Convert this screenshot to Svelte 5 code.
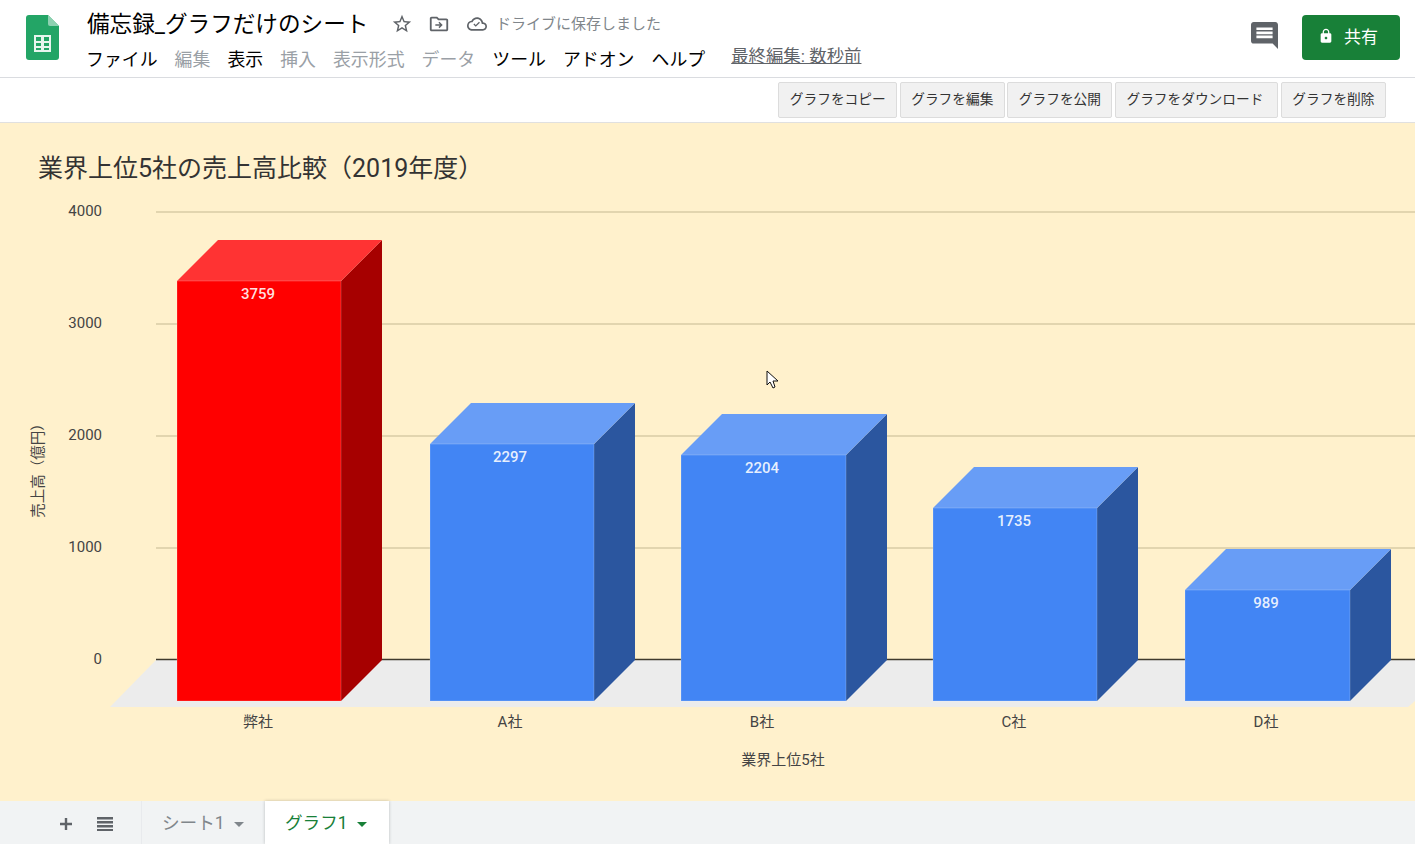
<script lang="ts">
  const menus = [
    { label: 'ファイル', off: false },
    { label: '編集', off: true },
    { label: '表示', off: false },
    { label: '挿入', off: true },
    { label: '表示形式', off: true },
    { label: 'データ', off: true },
    { label: 'ツール', off: false },
    { label: 'アドオン', off: false },
    { label: 'ヘルプ', off: false }
  ];
  const actions = ['グラフをコピー', 'グラフを編集', 'グラフを公開', 'グラフをダウンロード', 'グラフを削除'];

  // chart numbers are in page pixels, the svg viewBox starts at the top of the chart area
  const depth = 41;
  const bottom = 701;
  const bars = [
    { name: '弊社', value: 3759, x: 177, w: 164, top: 281, kind: 'red', cx: 258 },
    { name: 'A社', value: 2297, x: 430, w: 164, top: 444, kind: 'blue', cx: 510 },
    { name: 'B社', value: 2204, x: 681, w: 165, top: 455, kind: 'blue', cx: 762 },
    { name: 'C社', value: 1735, x: 933, w: 164, top: 508, kind: 'blue', cx: 1014 },
    { name: 'D社', value: 989, x: 1185, w: 165, top: 590, kind: 'blue', cx: 1266 }
  ];
  const ticks = [
    { label: '4000', y: 212 },
    { label: '3000', y: 324 },
    { label: '2000', y: 436 },
    { label: '1000', y: 548 }
  ];
</script>

<div class="page">
  <header class="head">
    <svg class="logo" viewBox="0 0 33 45" width="33" height="45">
      <path d="M3 0H22L33 11V42a3 3 0 0 1-3 3H3a3 3 0 0 1-3-3V3a3 3 0 0 1 3-3z" fill="#23a566" />
      <path d="M22 0L33 11H24a2 2 0 0 1-2-2z" fill="#8ed1b1" />
      <path d="M8 20H25V37H8zM10 22V26H15V22zM18 22V26H23V22zM10 28V31H15V28zM18 28V31H23V28zM10 33V35H15V33zM18 33V35H23V33z" fill="#e8f5ee" fill-rule="evenodd" />
    </svg>

    <div class="doc">
      <div class="title-row">
        <span class="doc-title">備忘録_グラフだけのシート</span>
        <svg class="star" viewBox="0 0 24 24">
          <path d="M22 9.24l-7.19-.62L12 2 9.19 8.63 2 9.24l5.46 4.73L5.82 21 12 17.27 18.18 21l-1.63-7.03L22 9.24zM12 15.4l-3.76 2.27 1-4.28-3.32-2.88 4.38-.38L12 6.1l1.71 4.04 4.38.38-3.32 2.88 1 4.28L12 15.4z" />
        </svg>
        <svg class="folder" viewBox="0 0 24 24">
          <path d="M20 6h-8l-2-2H4c-1.100 0-2 .9-2 2v12c0 1.100.9 2 2 2h16c1.100 0 2-.9 2-2V8c0-1.100-.9-2-2-2zm0 12H4V6h5.170l2 2H20v10zM12.500 9.500l-1.100 1.100 1.600 1.600H8v1.600h5l-1.600 1.600 1.100 1.100 3.500-3.500z" />
        </svg>
        <svg class="cloud" viewBox="0 0 24 24">
          <path d="M19.350 10.040C18.670 6.590 15.640 4 12 4 9.110 4 6.600 5.640 5.350 8.040 2.340 8.360 0 10.910 0 14c0 3.310 2.690 6 6 6h13c2.760 0 5-2.240 5-5 0-2.640-2.050-4.780-4.650-4.960zM19 18H6c-2.210 0-4-1.790-4-4 0-2.050 1.530-3.760 3.560-3.970l1.070-.11.500-.950C8.080 7.140 9.940 6 12 6c2.620 0 4.880 1.860 5.390 4.430l.300 1.500 1.530.110c1.560.100 2.780 1.410 2.780 2.960 0 1.650-1.350 3-3 3zM10.500 13.200l-1.700-1.700-1.100 1.100 2.800 2.800 5-5-1.100-1.100z" />
        </svg>
        <span class="saved">ドライブに保存しました</span>
      </div>
      <nav class="menu">
        {#each menus as m}
          <span class:off={m.off}>{m.label}</span>
        {/each}
        <span class="edited">最終編集: 数秒前</span>
      </nav>
    </div>

    <svg class="comment" viewBox="2 2 20 20" width="27" height="27">
      <path d="M21.990 4c0-1.100-.890-2-1.990-2H4c-1.100 0-2 .9-2 2v12c0 1.100.9 2 2 2h14l4 4-.010-18zM18 14H6v-2h12v2zm0-3H6V9h12v2zm0-3H6V6h12v2z" />
    </svg>
    <button class="share">
      <svg viewBox="0 0 24 24" width="16" height="16">
        <path d="M18 8h-1V6c0-2.760-2.240-5-5-5S7 3.240 7 6v2H6c-1.100 0-2 .9-2 2v10c0 1.100.9 2 2 2h12c1.100 0 2-.9 2-2V10c0-1.100-.9-2-2-2zm-6 9c-1.100 0-2-.9-2-2s.9-2 2-2 2 .9 2 2-.9 2-2 2zm3.100-9H8.900V6c0-1.710 1.390-3.100 3.100-3.100 1.710 0 3.100 1.390 3.100 3.100v2z" />
      </svg>
      共有
    </button>
  </header>

  <div class="toolbar">
    {#each actions as a}
      <button>{a}</button>
    {/each}
  </div>

  <main class="chart">
    <svg viewBox="0 123 1415 678" width="1415" height="678">
      <text class="title" x="38" y="177">業界上位5社の売上高比較（2019年度）</text>

      {#each ticks as t}
        <line class="grid" x1="156" x2="1415" y1={t.y} y2={t.y} />
        <text class="axis" x="102" y={t.y + 4} text-anchor="end">{t.label}</text>
      {/each}
      <text class="axis" x="102" y="664" text-anchor="end">0</text>

      <polygon class="floor" points="156,660 1415,660 1415,701 1408,707 110,707" />
      <line class="zero" x1="156" x2="1415" y1="659.500" y2="659.500" />

      {#each bars as b}
        <g class={b.kind}>
          <polygon class="side" points="{b.x + b.w},{b.top} {b.x + b.w + depth},{b.top - depth} {b.x + b.w + depth},{bottom - depth} {b.x + b.w},{bottom}" />
          <polygon class="cap" points="{b.x},{b.top} {b.x + depth},{b.top - depth} {b.x + b.w + depth},{b.top - depth} {b.x + b.w},{b.top}" />
          <rect class="front" x={b.x} y={b.top} width={b.w} height={bottom - b.top} />
        </g>
        <text class="value" x={b.cx} y={b.top + 17.500} text-anchor="middle">{b.value}</text>
        <text class="axis" x={b.cx} y="727" text-anchor="middle">{b.name}</text>
      {/each}

      <text class="axis" x="783" y="765" text-anchor="middle">業界上位5社</text>
      <text class="axis ylabel" transform="translate(43 467) rotate(-90)" text-anchor="middle">売上高（億円）</text>

      <path class="cursor" d="M767 371V385L770 382L773 388L775 387L773 381L778 381Z" />
    </svg>
  </main>

  <footer class="tabs">
    <svg class="plus" viewBox="0 0 14 14" width="14" height="14"><path d="M5.800 1h2.400v4.800H13v2.400H8.200V13H5.800V8.200H1V5.800h4.800z" /></svg>
    <svg class="list" viewBox="0 0 16 14" width="16" height="14"><path d="M0 0h16v2.500H0zM0 4h16v2.500H0zM0 8h16v2.500H0zM0 12h16v2H0z" /></svg>
    <div class="tab">シート1<i class="caret"></i></div>
    <div class="tab active">グラフ1<i class="caret"></i></div>
  </footer>
</div>

<style>
  :global(body) {
    margin: 0;
    background: #fff;
  }

  .page {
    width: 1415px;
    height: 844px;
    display: flex;
    flex-direction: column;
    overflow: hidden;
    font-family: Roboto, "Noto Sans CJK JP", sans-serif;
  }

  .head {
    height: 77px;
    flex: none;
    display: flex;
    align-items: flex-start;
    padding-left: 26px;
    padding-right: 15px;
    border-bottom: 1px solid #dadce0;
  }

  .logo {
    margin-top: 15px;
    flex: none;
  }

  .doc {
    margin-left: 28px;
    flex: 1;
  }

  .title-row {
    height: 48px;
    display: flex;
    align-items: center;
  }

  .doc-title {
    width: 304px;
    font-size: 22.600px;
    color: #000;
    white-space: nowrap;
    position: relative;
    top: -2px;
  }

  .title-row svg {
    flex: none;
    fill: #5f6368;
    width: 22px;
    height: 22px;
  }

  .folder {
    margin-left: 15px;
  }

  .title-row .cloud {
    width: 20px;
    height: 20px;
    margin-left: 17px;
  }

  .saved {
    margin-left: 9px;
    font-size: 15px;
    color: #80868b;
    position: relative;
    top: -2px;
  }

  .menu {
    display: flex;
    gap: 17px;
    font-size: 17.900px;
    line-height: 24px;
    color: #000;
    white-space: nowrap;
    margin: 0 0 0 -1px;
  }

  .menu .off {
    color: #9aa0a6;
  }

  .menu .edited {
    margin-left: 9px;
    font-size: 17.400px;
    color: #5f6368;
    text-decoration: underline;
    line-height: 20px;
    position: relative;
    top: -2px;
  }

  .comment {
    margin-top: 22px;
    margin-right: 24px;
    fill: #5f6368;
    flex: none;
  }

  .share {
    flex: none;
    width: 98px;
    height: 45px;
    margin-top: 15px;
    display: flex;
    align-items: center;
    justify-content: center;
    gap: 10px;
    background: #188038;
    color: #fff;
    border: 0;
    border-radius: 4px;
    font: inherit;
    font-size: 17px;
    padding: 0 6px 5px 0;
  }

  .share svg {
    fill: #fff;
    position: relative;
    top: 1px;
  }

  .toolbar {
    height: 45px;
    flex: none;
    box-sizing: border-box;
    display: flex;
    justify-content: flex-end;
    align-items: flex-start;
    gap: 2.500px;
    padding: 4px 29px 0 0;
    border-bottom: 1px solid #e0e0e0;
    background: #fff;
  }

  .toolbar button {
    height: 36px;
    box-sizing: border-box;
    padding: 0 10.500px 4px;
    background: #f1f1f1;
    border: 1px solid #dcdcdc;
    border-radius: 2px;
    color: #333;
    font: inherit;
    font-size: 13.700px;
    white-space: nowrap;
  }

  .toolbar button:nth-child(4) {
    min-width: 163px;
    padding-right: 14px;
  }

  .chart {
    flex: 1;
    min-height: 0;
    background: #fff1cc;
  }

  .chart svg {
    display: block;
  }

  .title {
    font-size: 25px;
    fill: #333;
  }

  .axis {
    font-size: 15px;
    fill: #444;
  }

  .ylabel {
    font-size: 14.500px;
  }

  .value {
    font-size: 15px;
    font-weight: 500;
    fill: #fff;
    fill-opacity: 0.88;
  }

  .grid {
    stroke: #d9cba6;
    stroke-width: 1.500;
  }

  .zero {
    stroke: #3f3a2c;
    stroke-width: 1.500;
  }

  .floor {
    fill: #ececec;
  }

  .front {
    stroke: rgba(255, 255, 255, 0.2);
    stroke-width: 1;
  }

  .red .front { fill: #ff0000; }
  .red .cap { fill: #ff3333; }
  .red .side { fill: #a60000; }
  .blue .front { fill: #4285f4; }
  .blue .cap { fill: #689df6; }
  .blue .side { fill: #2b569f; }

  .cursor {
    fill: #fff;
    stroke: #111;
    stroke-width: 1;
  }

  .tabs {
    height: 43px;
    flex: none;
    display: flex;
    align-items: stretch;
    background: #f1f3f4;
    position: relative;
  }

  .plus {
    fill: #5f6368;
    margin: 16px 0 0 59px;
  }

  .list {
    fill: #5f6368;
    margin: 16px 0 0 24px;
  }

  .tab {
    box-sizing: border-box;
    display: flex;
    align-items: center;
    gap: 9px;
    padding: 0 20px;
    font-size: 17.600px;
    color: #80868b;
    white-space: nowrap;
    border-left: 1px solid #e8eaed;
    padding-bottom: 2px;
  }

  .tabs .tab:nth-of-type(1) {
    margin-left: 28px;
    width: 124px;
  }

  .tab.active {
    width: 124px;
    background: #fff;
    color: #188038;
    border-left: 0;
    box-shadow: 0 0 3px rgba(60, 64, 67, 0.3);
  }

  .caret {
    width: 0;
    height: 0;
    border-left: 5px solid transparent;
    border-right: 5px solid transparent;
    border-top: 5px solid currentColor;
    margin-top: 5px;
  }
</style>
